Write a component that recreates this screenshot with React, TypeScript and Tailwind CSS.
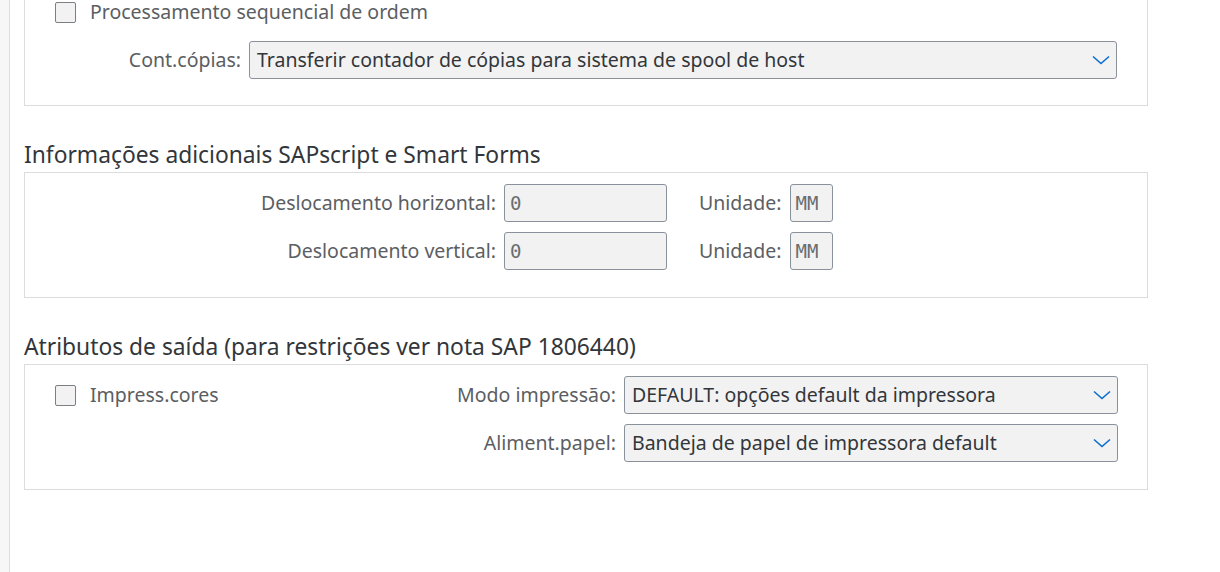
import { ReactNode } from 'react'

const font = { fontFamily: '"Noto Sans", "Open Sans", Arial, sans-serif' }

function Chevron(): ReactNode {
  return (
    <svg width="18" height="10" viewBox="0 0 18 10" className="shrink-0">
      <path d="M1 1.5 L9 8.5 L17 1.5" fill="none" stroke="#0a6ed1" strokeWidth="1.6" />
    </svg>
  )
}

function Select({ value, w }: { value: string; w: string }): ReactNode {
  return (
    <div
      className={`${w} h-[38px] flex items-center justify-between pl-[7px] pr-[6px] bg-[#f2f2f2] border border-[#89919a] rounded-[3px] text-[19.5px] text-[#32363a]`}
    >
      <span>{value}</span>
      <Chevron />
    </div>
  )
}

function Input({ value, w }: { value: string; w: string }): ReactNode {
  return (
    <div
      className={`${w} h-[38px] flex items-center px-[5px] bg-[#f2f2f2] border border-[#89919a] rounded-[3px] text-[19px] text-[#6a6d70]`}
      style={{ fontFamily: '"DejaVu Sans Mono", "Liberation Mono", monospace' }}
    >
      {value}
    </div>
  )
}

function Checkbox({ label }: { label: string }): ReactNode {
  return (
    <div className="flex items-center h-[38px]">
      <div className="w-[21px] h-[21px] bg-[#f2f2f2] border border-[#7a7f85] rounded-[2px]" />
      <span className="ml-[14px] leading-[22px] text-[19.5px] text-[#5b5e62]">{label}</span>
    </div>
  )
}

function Label({ text, w }: { text: string; w: string }): ReactNode {
  return <span className={`${w} shrink-0 text-right pr-[8px] text-[19.5px] text-[#5b5e62]`}>{text}</span>
}

function Title({ text }: { text: string }): ReactNode {
  return <h2 className="mt-[34px] h-[30px] leading-[30px] text-[22.8px] text-[#32363a]">{text}</h2>
}

export default function App(): ReactNode {
  return (
    <div className="flex h-[572px] w-[1220px] overflow-hidden bg-white" style={font}>
      <div className="w-[10px] shrink-0 bg-[#f7f7f7] border-r border-[#dedede]" />
      <div className="pl-[14px] w-[1138px]">
        {/* Spool group (scrolled) */}
        <div className="-mt-[19px] border border-[#dcdcdc] pt-[11px] pb-[26px] pl-[30px] pr-[29px] flex flex-col gap-[10px]">
          <Checkbox label="Processamento sequencial de ordem" />
          <div className="flex items-center">
            <Label text="Cont.cópias:" w="w-[194px]" />
            <Select value="Transferir contador de cópias para sistema de spool de host" w="w-[868px]" />
          </div>
        </div>

        <Title text="Informações adicionais SAPscript e Smart Forms" />
        <div className="mt-[2px] border border-[#dcdcdc] pt-[11px] pb-[27px] flex flex-col gap-[10px]">
          {[
            ['Deslocamento horizontal:', '0'],
            ['Deslocamento vertical:', '0'],
          ].map(([l, v]) => (
            <div key={l} className="flex items-center">
              <Label text={l} w="w-[479px]" />
              <Input value={v} w="w-[163px]" />
              <span className="ml-[32px] pr-[8px] text-[19.5px] text-[#5b5e62]">Unidade:</span>
              <Input value="MM" w="w-[43px]" />
            </div>
          ))}
        </div>

        <Title text="Atributos de saída (para restrições ver nota SAP 1806440)" />
        <div className="mt-[2px] border border-[#dcdcdc] pt-[11px] pb-[27px] pl-[30px] flex">
          <div className="w-[300px]">
            <Checkbox label="Impress.cores" />
          </div>
          <div className="flex flex-col gap-[10px]">
            <div className="flex items-center">
              <Label text="Modo impressão:" w="w-[269px]" />
              <Select value="DEFAULT: opções default da impressora" w="w-[494px]" />
            </div>
            <div className="flex items-center">
              <Label text="Aliment.papel:" w="w-[269px]" />
              <Select value="Bandeja de papel de impressora default" w="w-[494px]" />
            </div>
          </div>
        </div>
      </div>
    </div>
  )
}
